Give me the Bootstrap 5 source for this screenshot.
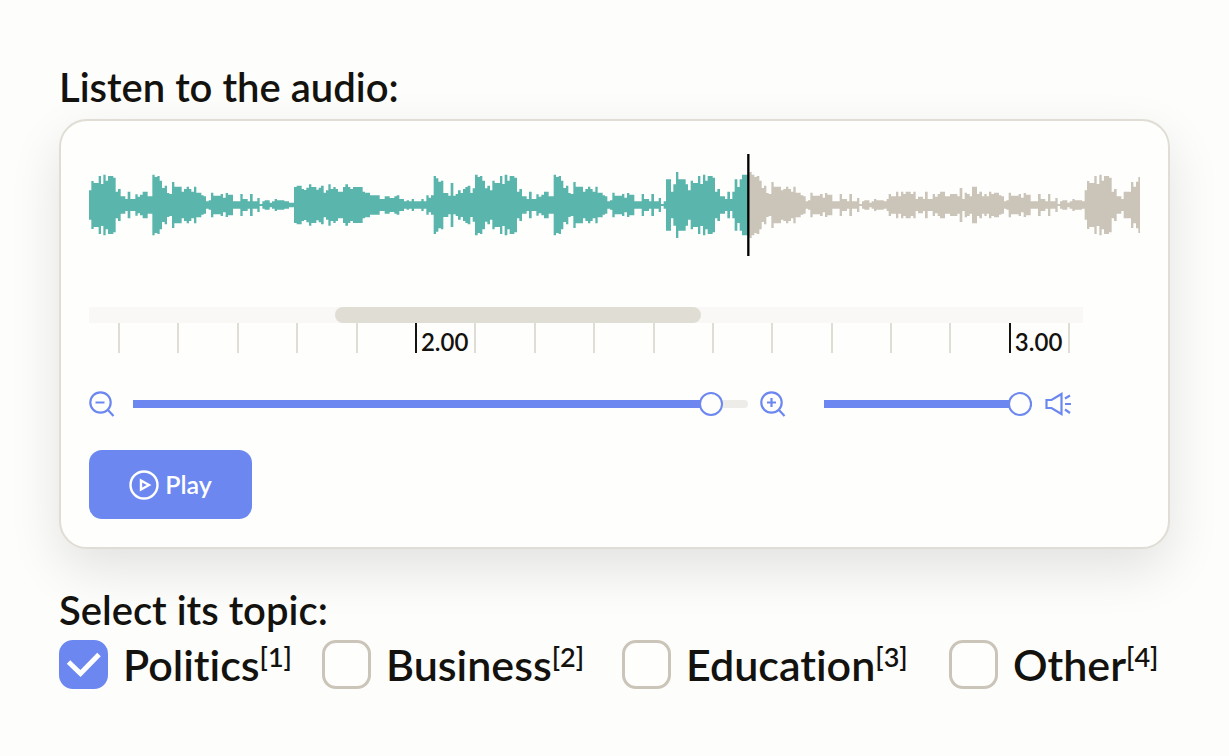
<!DOCTYPE html>
<html lang="en">
<head>
<meta charset="utf-8">
<meta name="viewport" content="width=device-width, initial-scale=1">
<title>Audio classification</title>
<link href="https://cdn.jsdelivr.net/npm/bootstrap@5.3.0/dist/css/bootstrap.min.css" rel="stylesheet">
<style>
  :root { --accent: #6c88f0; --sand: #cbc4b8; --line: #e0ddd4; --ink: #13120e; }
  body { background: #fdfdfb; color: var(--ink); font-family: Lato, "Liberation Sans", sans-serif; font-weight: 600; font-variant-ligatures: none; }
  .page { padding: 63px 59px 60px; }
  .prompt { font-size: 40px; line-height: 48px; font-weight: 600; margin: 0; }
  .player { background: #fefefc; border: 2px solid var(--line); border-radius: 28px; padding: 32px 28px 28px;
            margin: 8px 0 37px; box-shadow: 0 20px 52px rgba(0,0,0,.11); }
  .wave { height: 104px; margin-bottom: 50px; }
  .wave svg { display: block; width: 100%; height: 100%; }
  .timeline { width: 94.6%; }
  .scroller { height: 16px; background: #f9f8f6; }
  .scroller-thumb { height: 16px; margin-left: 24.7%; width: 36.9%; background: var(--line); border-radius: 8px; }
  .ruler { padding: 0 13px 0 29px; }
  .tick { flex: 1 1 0; height: 30px; border-left: 2px solid var(--line); font-size: 24px; line-height: 38px; padding-left: 4px; min-width: 0; }
  .tick.major { border-color: var(--ink); }
  .tick:last-child { flex: 0 0 2px; padding: 0; }
  .controls { height: 26px; margin: 38px 0 33px; }
  .controls svg { flex: none; }
  .icon { fill: none; stroke: var(--accent); stroke-width: 2.2; }
  .zoom { flex: 0 1 615px; margin: 0 12px 0 18px; }
  .volume { flex: 0 1 208px; margin: 0 13px 0 38px; }
  .slider { -webkit-appearance: none; appearance: none; height: 26px; min-width: 0; background: none; }
  .slider::-webkit-slider-runnable-track { height: 8px; border-radius: 0 4px 4px 0;
    background: linear-gradient(to right, var(--accent) var(--fill), #eeece8 var(--fill)); }
  .slider::-webkit-slider-thumb { -webkit-appearance: none; width: 24px; height: 24px; margin-top: -8px;
    border: 2px solid var(--accent); border-radius: 50%; background: #fefefc; }
  .btn-play, .btn-play:hover { background: var(--accent); color: #fff; }
  .btn-play { width: 163px; height: 69px; border: 0; border-radius: 13px; font-size: 25px; font-weight: 600; gap: 6px; }
  .topics { display: grid; grid-template-columns: 263fr 300fr 327fr 221fr; margin-top: 6px; }
  .topic { font-size: 43px; line-height: 49px; white-space: nowrap; }
  .topic .form-check-input { flex: none; width: 49px; height: 49px; margin: 0 15px 0 0; border: 3px solid var(--sand);
    border-radius: 14px; background-color: #fefefc; }
  .topic .form-check-input:checked { border-color: var(--accent); background-color: var(--accent); background-size: 49px 49px;
    background-image: url("data:image/svg+xml,%3Csvg xmlns='http://www.w3.org/2000/svg' viewBox='0 0 49 49'%3E%3Cpath d='M9.5 22 21.5 33.5 40 14.5' fill='none' stroke='%23fff' stroke-width='5'/%3E%3C/svg%3E"); }
  .hotkey { font-size: 27px; line-height: 27px; font-weight: 600; align-self: flex-start; margin-top: 3px; }
</style>
</head>
<body>
<main class="page">
  <h1 class="prompt">Listen to the audio:</h1>

  <section class="player">
    <div class="wave">
      <svg viewBox="0 -156 3153 312" preserveAspectRatio="none" role="img" aria-label="Waveform">
        <defs>
          <clipPath id="played"><rect x="0" y="-156" width="1977" height="312"/></clipPath>
          <clipPath id="rest"><rect x="1977" y="-156" width="1176" height="312"/></clipPath>
        </defs>
        <path class="wave-shape" fill="#5ab6ac" clip-path="url(#played)"/>
        <path class="wave-shape" fill="#cbc4b8" clip-path="url(#rest)"/>
        <path d="M1978-153V153" stroke="#000" stroke-width="7"/>
      </svg>
    </div>

    <div class="timeline">
      <div class="scroller"><div class="scroller-thumb"></div></div>
      <div class="ruler d-flex">
        <div class="tick"></div><div class="tick"></div><div class="tick"></div><div class="tick"></div><div class="tick"></div>
        <div class="tick major">2.00</div>
        <div class="tick"></div><div class="tick"></div><div class="tick"></div><div class="tick"></div><div class="tick"></div>
        <div class="tick"></div><div class="tick"></div><div class="tick"></div><div class="tick"></div>
        <div class="tick major">3.00</div>
        <div class="tick"></div>
      </div>
    </div>

    <div class="controls d-flex align-items-center">
      <svg class="icon" width="26" height="26" aria-hidden="true"><circle cx="11.500" cy="11.500" r="10.200"/><path d="M18.500 18.500 24.500 25M6.500 11.500h9"/></svg>
      <input class="slider zoom" type="range" min="0" max="1000" value="958" style="--fill:95%" aria-label="Zoom">
      <svg class="icon" width="26" height="26" aria-hidden="true"><circle cx="11.500" cy="11.500" r="10.200"/><path d="M18.500 18.500 24.500 25M7 11.500h9M11.500 7v9"/></svg>
      <input class="slider volume" type="range" min="0" max="100" value="100" style="--fill:100%" aria-label="Volume">
      <svg class="icon" width="26" height="26" aria-hidden="true"><path d="M1.500 9H6.500L16.500 3V23L6.500 17H1.500ZM20 7.500 25 4.500M20 13H26M20 18.500 25 22"/></svg>
    </div>

    <button type="button" class="btn btn-play d-flex align-items-center justify-content-center p-0">
      <svg width="30" height="30" fill="none" stroke="#fff" stroke-width="2.400" aria-hidden="true"><circle cx="15" cy="15" r="13.500"/><path d="M12 10.500V19.500L20 15Z"/></svg>
      Play
    </button>
  </section>

  <h2 class="prompt">Select its topic:</h2>
  <div class="topics">
    <label class="topic d-flex" for="t1"><input class="form-check-input" type="checkbox" id="t1" checked>Politics<span class="hotkey">[1]</span></label>
    <label class="topic d-flex" for="t2"><input class="form-check-input" type="checkbox" id="t2">Business<span class="hotkey">[2]</span></label>
    <label class="topic d-flex" for="t3"><input class="form-check-input" type="checkbox" id="t3">Education<span class="hotkey">[3]</span></label>
    <label class="topic d-flex" for="t4"><input class="form-check-input" type="checkbox" id="t4">Other<span class="hotkey">[4]</span></label>
  </div>
</main>

<script src="https://cdn.jsdelivr.net/npm/bootstrap@5.3.0/dist/js/bootstrap.bundle.min.js"></script>
<script>
  // Each chunk: start offset on the time axis, then "position:amplitude" steps.
  const chunks = [
    [-27, "27:44 34:72 41:66 56:87 63:63 70:91 77:73 84:87 100:82 107:40 114:48 122:26 136:18 143:40 151:18 166:32 173:25 180:31 188:40 203:26 217:91 224:84 232:87 239:73 246:51 254:58 261:36 268:33 276:69 283:55 305:40 312:48 320:55 327:48 334:40 342:55 349:37 364:29 371:26 378:11 386:14 393:37 400:28 422:33 429:22 437:36 444:31 459:11 481:33 488:18 503:11 510:33 518:11 532:21 539:3 547:11 554:14 569:7 576:11 584:18 591:14 613:11 627:7"],
    [603, "12:54 20:58 35:48 42:45 49:52 57:62 64:54 79:46 86:52 93:58 101:37 108:44 115:62 122:48 130:54 137:48 144:40 159:54 166:62 174:54 181:48 189:54 218:40 225:37 240:29 269:18 284:26 299:21 313:26 320:29 328:18 342:11 350:14 357:11 365:18 372:11 394:18 401:11 409:29 416:22 423:29 431:87 438:80 445:70 453:73 460:36 475:28 482:66 490:28 497:33 504:44 512:36 519:48 526:54 533:58 541:36 548:50 555:91 563:84 570:87 577:73 585:50 592:58 600:44 607:73 614:66"],
    [1233, "0:87 7:63 14:91 22:73 29:87 43:82 51:40 58:48 66:26 80:18 87:40 95:18 109:32 116:25 124:31 132:40 146:26 161:91 168:84 176:87 183:73 190:51 198:58 205:36 212:33 220:69 227:55 249:40 256:48 264:55 271:48 278:40 286:55 293:37 308:29 315:26 322:11 330:14 337:37 344:28 366:33 373:22 381:36 388:31 403:11 425:33 432:18 447:11 454:33 462:11 476:21 483:3 491:11 498:77 513:40 520:62 528:99 535:77 557:62 564:44 572:73 579:66 594:87 601:63 609:91 616:73 623:87"],
    [1863, "8:82 15:40 22:48 30:26 45:18 52:40 60:18 67:40 74:77 82:54 89:77 96:91 118:99 125:91 133:84 140:87 148:73 155:51 162:58 169:36 176:33 184:69 191:55 213:44 220:48 228:55 235:48 243:40 250:55 257:37 272:29 280:26 287:11 294:14 301:37 308:28 330:33 338:22 345:36 352:31 367:11 389:33 396:18 411:11 418:33 426:11 441:21 448:3 456:11 463:14 478:7 485:11 492:18 499:14 521:11 530:18 536:33 543:26 558:40 565:26 573:40 580:33 587:40 602:33 610:40 617:18 624:25"],
    [2493, "9:18 15:40 23:18 38:33 45:25 53:33 60:40 75:26 90:33 112:26 119:51 127:18 134:37 141:33 149:26 156:55 171:33 178:40 186:26 193:33 200:26 207:40 214:33 222:37 237:29 244:26 252:11 259:14 266:37 273:28 296:33 303:22 311:36 318:31 332:11 354:33 362:18 376:11 384:33 391:11 406:21 413:3 420:11 427:14 442:7 449:11 457:18 464:14 486:11 494:44 501:72 508:66 523:87 530:63 538:91 545:73 552:87 567:82 575:40 582:48 590:26 604:18 611:40 633:69 640:55 648:70 655:84"]
  ];

  const end = 3153;
  const steps = chunks.flatMap(([start, text]) => text.split(" ").map(s => {
    const [x, h] = s.split(":").map(Number);
    return [x + start, h];
  }));

  // One closed outline: along the upper edge, then back along the mirrored lower edge.
  const upper = steps.map(([x, h]) => `H${x}V${-h}`).join("");
  const lower = [...steps].reverse().map(([x, h]) => `V${h}H${x}`).join("");
  const outline = `M0 0${upper}H${end}${lower}Z`;
  document.querySelectorAll(".wave-shape").forEach(p => p.setAttribute("d", outline));
</script>
</body>
</html>
